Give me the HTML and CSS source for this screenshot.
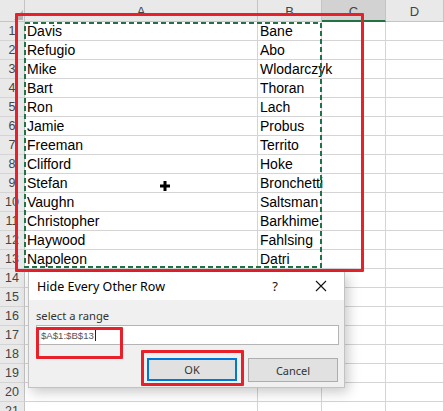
FILE: index.html
```html
<!DOCTYPE html>
<html>
<head>
<meta charset="utf-8">
<link rel="stylesheet" href="styles.css">
</head>
<body>
<div class="sheet">
  <div class="corner"><svg class="tri" width="9" height="10" viewBox="0 0 9 10"><polygon points="9,0 9,10 0,10" fill="#b4b4b4"/></svg></div>
  <div class="col">A</div><div class="col">B</div><div class="col sel">C</div><div class="col">D</div>

  <div class="row">1</div><div class="cell">Davis</div><div class="cell">Bane</div><div class="cell"></div><div class="cell"></div>
  <div class="row">2</div><div class="cell">Refugio</div><div class="cell">Abo</div><div class="cell"></div><div class="cell"></div>
  <div class="row">3</div><div class="cell">Mike</div><div class="cell">Wlodarczyk</div><div class="cell"></div><div class="cell"></div>
  <div class="row">4</div><div class="cell">Bart</div><div class="cell">Thoran</div><div class="cell"></div><div class="cell"></div>
  <div class="row">5</div><div class="cell">Ron</div><div class="cell">Lach</div><div class="cell"></div><div class="cell"></div>
  <div class="row">6</div><div class="cell">Jamie</div><div class="cell">Probus</div><div class="cell"></div><div class="cell"></div>
  <div class="row">7</div><div class="cell">Freeman</div><div class="cell">Territo</div><div class="cell"></div><div class="cell"></div>
  <div class="row">8</div><div class="cell">Clifford</div><div class="cell">Hoke</div><div class="cell"></div><div class="cell"></div>
  <div class="row">9</div><div class="cell">Stefan</div><div class="cell">Bronchetti</div><div class="cell"></div><div class="cell"></div>
  <div class="row">10</div><div class="cell">Vaughn</div><div class="cell">Saltsman</div><div class="cell"></div><div class="cell"></div>
  <div class="row">11</div><div class="cell">Christopher</div><div class="cell">Barkhime</div><div class="cell"></div><div class="cell"></div>
  <div class="row">12</div><div class="cell">Haywood</div><div class="cell">Fahlsing</div><div class="cell"></div><div class="cell"></div>
  <div class="row">13</div><div class="cell">Napoleon</div><div class="cell">Datri</div><div class="cell"></div><div class="cell"></div>
  <div class="row">14</div><div class="cell"></div><div class="cell"></div><div class="cell"></div><div class="cell"></div>
  <div class="row">15</div><div class="cell"></div><div class="cell"></div><div class="cell"></div><div class="cell"></div>
  <div class="row">16</div><div class="cell"></div><div class="cell"></div><div class="cell"></div><div class="cell"></div>
  <div class="row">17</div><div class="cell"></div><div class="cell"></div><div class="cell"></div><div class="cell"></div>
  <div class="row">18</div><div class="cell"></div><div class="cell"></div><div class="cell"></div><div class="cell"></div>
  <div class="row">19</div><div class="cell"></div><div class="cell"></div><div class="cell"></div><div class="cell"></div>
  <div class="row">20</div><div class="cell"></div><div class="cell"></div><div class="cell"></div><div class="cell"></div>
  <div class="row">21</div><div class="cell"></div><div class="cell"></div><div class="cell"></div><div class="cell"></div>
</div>

<svg class="marquee" width="298" height="246" viewBox="0 0 298 246">
  <rect x="1" y="1" width="296" height="244" fill="none" stroke="#217346" stroke-width="2" stroke-dasharray="5 3"/>
</svg>

<div class="mark mark-range"></div>

<svg class="cursor" width="10" height="10" viewBox="0 0 10 10">
  <rect x="3.5" y="0" width="3" height="10" fill="#000"/>
  <rect x="0" y="3.5" width="10" height="3" fill="#000"/>
</svg>

<div class="dialog">
  <div class="titlebar">
    <div class="title">Hide Every Other Row</div>
    <div class="help">?</div>
    <div class="close"><svg width="12" height="12" viewBox="0 0 12 12"><path d="M1 1 L11 11 M11 1 L1 11" stroke="#111" stroke-width="1.1" fill="none"/></svg></div>
  </div>
  <div class="dbody">
    <div class="label">select a range</div>
    <div class="input"><span class="val">$A$1:$B$13</span><span class="caret"></span></div>
    <div class="buttons">
      <div class="btn ok">OK</div>
      <div class="btn">Cancel</div>
    </div>
  </div>
</div>

<div class="mark mark-input"></div>
<div class="mark mark-ok"></div>
</body>
</html>
```

FILE: styles.css
```css
html, body {
  margin: 0;
  padding: 0;
  overflow: hidden;
  background: #fff;
}
body {
  width: 444px;
  height: 411px;
  position: relative;
  font-family: "Liberation Sans", Arial, sans-serif;
}
.sheet {
  display: grid;
  grid-template-columns: 25px 233px 64px 64px 58px;
  grid-template-rows: 22px;
  grid-auto-rows: 19px;
}
.sheet > div {
  box-sizing: border-box;
  border-right: 1px solid #d4d4d4;
  border-bottom: 1px solid #d4d4d4;
  white-space: nowrap;
}
.corner {
  background: #e9e9e9;
  position: relative;
  border-right-color: #c4c4c4 !important;
  border-bottom-color: #c4c4c4 !important;
}
.tri {
  position: absolute;
  right: 1px;
  bottom: 1px;
}
.col {
  background: #e9e9e9;
  color: #444;
  font-size: 13px;
  text-align: center;
  line-height: 24px;
  border-right-color: #c4c4c4 !important;
  border-bottom-color: #c4c4c4 !important;
}
.col.sel {
  background: #d2d2d2;
  border-bottom: 2px solid #217346 !important;
  line-height: 23px;
}
.row {
  background: #e9e9e9;
  color: #444;
  font-size: 12.5px;
  text-align: center;
  line-height: 19px;
  border-right-color: #c4c4c4 !important;
}
.cell {
  font-size: 14px;
  line-height: 18px;
  padding-left: 2px;
  color: #000;
}
.marquee {
  position: absolute;
  left: 24px;
  top: 22px;
}
.mark {
  position: absolute;
  box-sizing: border-box;
  border: 3px solid #e8202a;
  border-radius: 1px;
}
.mark-range {
  left: 15px;
  top: 13px;
  width: 349px;
  height: 259px;
}
.mark-input {
  left: 36px;
  top: 327px;
  width: 87px;
  height: 32px;
}
.mark-ok {
  left: 141px;
  top: 350px;
  width: 103px;
  height: 36px;
}
.cursor {
  position: absolute;
  left: 160px;
  top: 181px;
}
.dialog {
  position: absolute;
  left: 28px;
  top: 272px;
  width: 317px;
  height: 116px;
  box-sizing: border-box;
  border: 1px solid #c2c2c2;
  border-top: none;
  background: #f0f0f0;
  box-shadow: 3px 4px 12px rgba(0, 0, 0, 0.22);
  font-family: "Noto Sans", "Liberation Sans", sans-serif;
}
.titlebar {
  height: 28px;
  background: #fff;
  display: flex;
  align-items: center;
}
.title {
  flex: 1;
  padding-left: 8px;
  font-size: 12.5px;
  color: #000;
}
.help {
  width: 46px;
  text-align: center;
  font-size: 13px;
  color: #111;
}
.close {
  width: 46px;
  display: flex;
  justify-content: center;
  align-items: center;
}
.dbody {
  padding: 9px 5px 0 7px;
}
.label {
  font-size: 11.2px;
  line-height: 14px;
  color: #333;
}
.input {
  margin-top: 2px;
  height: 20px;
  box-sizing: border-box;
  border: 1px solid #b4b4b4;
  background: #fff;
  display: flex;
  align-items: center;
  padding-left: 4px;
}
.val {
  font-family: "Liberation Sans", Arial, sans-serif;
  font-size: 9.6px;
  color: #555;
}
.caret {
  width: 1px;
  height: 12px;
  background: #222;
  margin-left: 1px;
}
.buttons {
  margin-top: 13px;
  display: flex;
  justify-content: flex-end;
  gap: 11px;
  padding-right: 1px;
}
.btn {
  width: 90px;
  height: 24px;
  box-sizing: border-box;
  border: 1px solid #adadad;
  background: #e1e1e1;
  font-size: 11px;
  color: #333;
  display: flex;
  align-items: center;
  justify-content: center;
}
.btn.ok {
  border: 2px solid #0078d7;
  height: 23px;
}
```
